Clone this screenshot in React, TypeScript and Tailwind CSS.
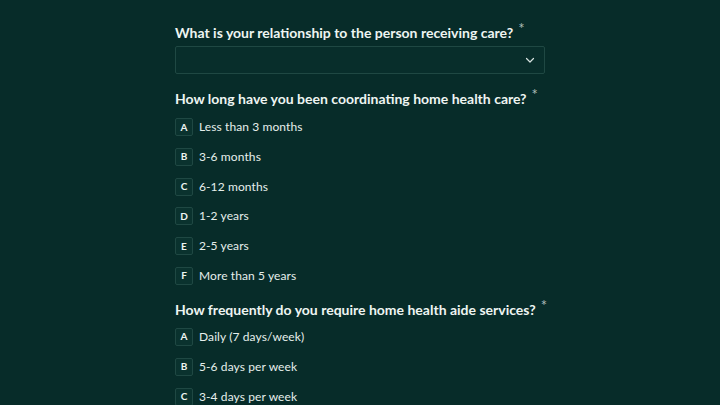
const font = { fontFamily: 'Lato, "Noto Sans", sans-serif' };

interface Question {
  title: string;
  options: string[];
}

const questions: Question[] = [
  {
    title: 'How long have you been coordinating home health care?',
    options: ['Less than 3 months', '3-6 months', '6-12 months', '1-2 years', '2-5 years', 'More than 5 years'],
  },
  {
    title: 'How frequently do you require home health aide services?',
    options: ['Daily (7 days/week)', '5-6 days per week', '3-4 days per week'],
  },
];

const letters = ['A', 'B', 'C', 'D', 'E', 'F'];

function Label({ text }: { text: string }) {
  return (
    <h2 className="whitespace-nowrap text-[14px] leading-5 font-bold text-[#eef5f2]">
      {text}
      <span className="relative -top-[4px] ml-[5px] text-[15px] leading-none font-normal text-[#aebdb9]">*</span>
    </h2>
  );
}

export default function App() {
  return (
    <div className="h-[405px] overflow-hidden bg-[#072c29]" style={font}>
      <div className="mx-auto w-[370px] pt-[23px]">
        <Label text="What is your relationship to the person receiving care?" />
        <div className="mt-[3px] h-[28px] flex items-center justify-end rounded-[2px] border border-[#1f4843] bg-[#082e2b] pr-[8px]">
          <svg width="12" height="12" viewBox="0 0 24 24" fill="none" stroke="#d6e2df" strokeWidth="2.4" strokeLinecap="round" strokeLinejoin="round">
            <path d="M5 9l7 7 7-7" />
          </svg>
        </div>

        {questions.map((q, qi) => (
          <div key={qi} className="mt-[15px]">
            <Label text={q.title} />
            <div className={`${qi === 0 ? 'mt-[9px]' : 'mt-[8px]'} flex flex-col gap-[11.8px]`}>
              {q.options.map((opt, i) => (
                <div key={opt} className="flex items-center gap-[6px]">
                  <span className="w-[18px] h-[18px] flex items-center justify-center rounded-[2px] border border-[#1f4843] bg-[#0a322e] text-[10px] font-bold text-[#eef5f2]">
                    {letters[i]}
                  </span>
                  <span className="text-[12px] leading-[18px] text-[#e6efec] tracking-[0.1px]">{opt}</span>
                </div>
              ))}
            </div>
          </div>
        ))}
      </div>
    </div>
  );
}
